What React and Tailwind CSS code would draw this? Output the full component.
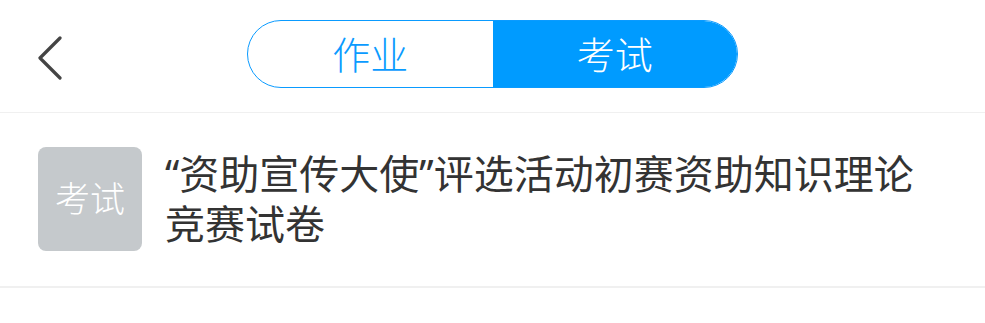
export default function App() {
  const font = { fontFamily: '"Noto Sans", "Noto Sans CJK SC", sans-serif' };
  return (
    <div className="w-[985px] h-[323px] bg-white font-light" style={font}>
      {/* Header */}
      <div className="relative h-[113px] flex items-center justify-center border-b border-[#f0f0f0]">
        <svg className="absolute left-[36px] top-[36px]" width="28" height="44" viewBox="0 0 28 44" fill="none">
          <polyline points="24,2 4,22 24,42" stroke="#444" strokeWidth="3.2" strokeLinecap="round" strokeLinejoin="round" />
        </svg>
        <div className="flex w-[491px] h-[68px] rounded-full border-[1.5px] border-[#0a9bff] overflow-hidden -mt-[4px]">
          <div className="flex-1 flex items-center justify-center text-[38px] text-[#0a9bff]">作业</div>
          <div className="flex-1 flex items-center justify-center text-[38px] text-white bg-[#009bff]">考试</div>
        </div>
      </div>
      {/* Row */}
      <div className="flex items-start gap-[23px] pl-[38px] pt-[34px] pb-[35px] border-b-2 border-[#f0f0f0]">
        <div className="w-[104px] h-[104px] shrink-0 rounded-[8px] bg-[#c5c9cc] flex items-center justify-center text-[35px] text-white">考试</div>
        <div className="text-[40px] leading-[50px] font-normal text-[#333] pt-[2px] w-[765px]">
          “资助宣传大使”评选活动初赛资助知识理论竞赛试卷
        </div>
      </div>
    </div>
  );
}
